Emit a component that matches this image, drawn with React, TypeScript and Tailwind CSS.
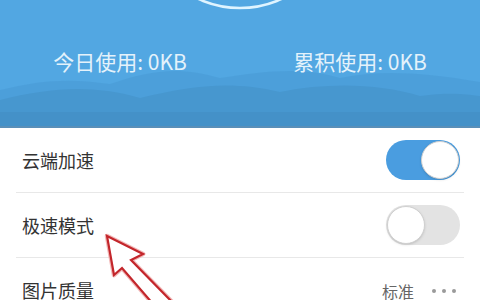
const Toggle = ({ on }: { on: boolean }) => (
  <div
    className={`w-[74px] h-[40px] rounded-full flex items-center p-[1px] ${
      on ? "bg-[#4a9de0] justify-end" : "bg-[#e3e3e3] justify-start"
    }`}
  >
    <div className="w-[38px] h-[38px] rounded-full bg-white border border-[#d0d0d0] shadow-sm" />
  </div>
);

const Row = ({ label, children, last }: { label: string; children: React.ReactNode; last?: boolean }) => (
  <div className={`h-[65px] mx-4 flex items-center justify-between ${last ? "" : "border-b border-[#e8e8e8]"}`}>
    <span className="pl-[6px] text-[18px] text-[#333]">{label}</span>
    <div className="pr-[4px]">{children}</div>
  </div>
);

export default function App() {
  return (
    <div
      className="w-[480px] h-[300px] overflow-hidden bg-white relative"
      style={{ fontFamily: '"Noto Sans CJK SC", "Noto Sans", sans-serif' }}
    >
      <div className="relative h-[128px] bg-[#52a7e2] border-b-2 border-[#5a8fb8] overflow-hidden">
        <svg className="absolute inset-0" width="480" height="128" viewBox="0 0 480 128">
          <circle cx="240" cy="-92" r="100" fill="none" stroke="#dff4ff" strokeWidth="2.5" />
          <path
            d="M0 90 C40 80 70 78 110 84 C150 70 180 66 220 78 C260 72 300 66 340 78 C380 70 420 72 480 82 L480 128 L0 128 Z"
            fill="#4b9ed8"
            opacity="0.8"
          />
          <path
            d="M0 100 C50 88 90 84 140 98 C190 86 230 80 280 92 C330 82 380 84 420 96 C450 92 465 94 480 96 L480 128 L0 128 Z"
            fill="#4797cf"
          />
          <rect x="0" y="112" width="480" height="16" fill="#4491c8" />
        </svg>
        <div className="relative grid grid-cols-2 pt-[46px] text-[21px] text-[#e4f2fb] leading-[30px]">
          <div className="text-center">今日使用: 0KB</div>
          <div className="text-center">累积使用: 0KB</div>
        </div>
      </div>

      <Row label="云端加速">
        <Toggle on />
      </Row>
      <Row label="极速模式">
        <Toggle on={false} />
      </Row>
      <Row label="图片质量" last>
        <div className="flex items-center gap-[18px] text-[16px] text-[#666]">
          <span>标准</span>
          <div className="flex gap-[6px] pr-[4px]">
            <span className="w-[4px] h-[4px] rounded-full bg-[#9a9a9a]" />
            <span className="w-[4px] h-[4px] rounded-full bg-[#9a9a9a]" />
            <span className="w-[4px] h-[4px] rounded-full bg-[#9a9a9a]" />
          </div>
        </div>
      </Row>

      <svg className="absolute left-0 top-0 pointer-events-none" width="480" height="300" viewBox="0 0 480 300">
        <polygon
          points="107,236 143,254 131,260 174,304 160,312 122,268 114,275"
          fill="#ffffff"
          stroke="#f2b8b8"
          strokeWidth="4.5"
          strokeLinejoin="round"
        />
        <polygon
          points="107,236 143,254 131,260 174,304 160,312 122,268 114,275"
          fill="#ffffff"
          stroke="#c3262b"
          strokeWidth="2.2"
          strokeLinejoin="miter"
        />
      </svg>
    </div>
  );
}
